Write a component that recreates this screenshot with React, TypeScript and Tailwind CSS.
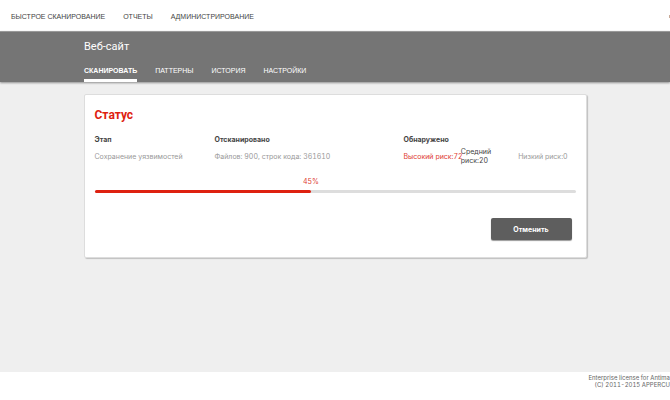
import { useState } from "react";

const mainLinks = ["БЫСТРОЕ СКАНИРОВАНИЕ", "ОТЧЕТЫ", "АДМИНИСТРИРОВАНИЕ"];
const tabs = ["СКАНИРОВАТЬ", "ПАТТЕРНЫ", "ИСТОРИЯ", "НАСТРОЙКИ"];

function App() {
  const [active, setActive] = useState(tabs[0]);
  const progress = 45;

  return (
    <div className="flex min-h-screen flex-col overflow-x-hidden bg-[#efefef] font-['Liberation_Sans',Arial,sans-serif] text-[7px] leading-[9px] text-[#444]">
      <header className="flex h-[31px] items-center justify-between bg-white pl-[11px] pt-[2px]">
        <nav className="flex gap-[18px] whitespace-nowrap">
          {mainLinks.map((link) => (
            <a key={link} href="#" className="hover:underline">
              {link}
            </a>
          ))}
        </nav>
        <span className="h-[3px] w-px bg-[#c9aa98]" />
      </header>

      <div className="border-t border-[#999] bg-[#757575] text-white shadow-[0_1px_2px_rgba(0,0,0,0.4)]">
        <div className="mx-auto max-w-[502px] pt-2">
          <h1 className="font-[Roboto,sans-serif] text-[11px] leading-[14px]">Веб-сайт</h1>
          <nav className="mt-3 flex gap-[18px] whitespace-nowrap">
            {tabs.map((tab) => (
              <a
                key={tab}
                href="#"
                onClick={() => setActive(tab)}
                className={`border-b-[3px] pb-1 ${
                  tab === active ? "border-white font-bold" : "border-transparent"
                }`}
              >
                {tab}
              </a>
            ))}
          </nav>
        </div>
      </div>

      <main className="mx-auto mt-3 w-full max-w-[503px] rounded-[2px] border border-[#ddd] bg-white px-[10px] pb-[17px] pt-3 font-[Inter,sans-serif] tabular-nums shadow-[1px_1px_1px_rgba(0,0,0,0.2)]">
        <h2 className="font-[Roboto,sans-serif] text-[12px] font-bold leading-4 text-[#de2110]">Статус</h2>

        <div className="mt-3 grid grid-cols-[120px_189px_1fr]">
          <section>
            <h3 className="font-bold">Этап</h3>
            <p className="flex h-6 items-center text-[#999]">Сохранение уязвимостей</p>
          </section>
          <section>
            <h3 className="font-bold">Отсканировано</h3>
            <p className="flex h-6 items-center text-[#999]">Файлов: 900, строк кода: 361610</p>
          </section>
          <section>
            <h3 className="font-bold">Обнаружено</h3>
            <div className="grid h-6 grid-cols-3 items-center">
              <span className="whitespace-nowrap text-[#de3b30]">Высокий риск:72</span>
              <span className="pr-4">Средний риск:20</span>
              <span className="whitespace-nowrap text-[#999]">Низкий риск:0</span>
            </div>
          </section>
        </div>

        <div className="mt-[9px] pb-1">
          <div className="flex justify-end text-[#de3b30]" style={{ width: `${progress}%` }}>
            <span className="translate-x-1/2">{progress}%</span>
          </div>
        </div>
        <div className="h-[3px] rounded-full bg-[#ddd]">
          <div className="h-full rounded-full bg-[#de2110]" style={{ width: `${progress}%` }} />
        </div>

        <div className="mt-[25px] flex justify-end pr-1">
          <button
            type="button"
            className="h-[22px] w-[81px] rounded-[2px] bg-[#5e5e5e] font-bold text-white shadow-[0_1px_1px_rgba(0,0,0,0.4)]"
          >
            Отменить
          </button>
        </div>
      </main>

      <footer className="mt-auto flex h-[28px] justify-end bg-white pt-[2px] font-[Inter,sans-serif] text-[6px] leading-[7px] tabular-nums text-[#666]">
        <div className="whitespace-nowrap text-right">
          <p>Enterprise license for Antima</p>
          <p>(C) 2011-2015 APPERCU</p>
        </div>
      </footer>
    </div>
  );
}

export default App;
